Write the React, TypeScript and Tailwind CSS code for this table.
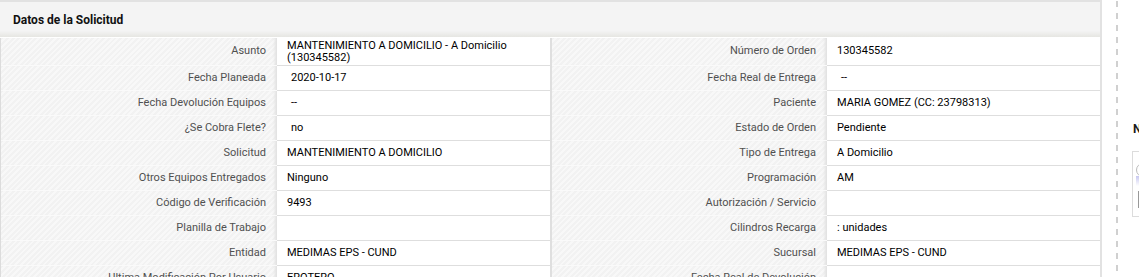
import React from "react";

type Row = { l1: string; v1: string; l2: string; v2: string; s1?: boolean; s2?: boolean; tall?: boolean };

const rows: Row[] = [
  { l1: "Asunto", v1: "MANTENIMIENTO A DOMICILIO - A Domicilio (130345582)", l2: "Número de Orden", v2: "130345582", tall: true },
  { l1: "Fecha Planeada", v1: "2020-10-17", s1: true, l2: "Fecha Real de Entrega", v2: "--", s2: true },
  { l1: "Fecha Devolución Equipos", v1: "--", s1: true, l2: "Paciente", v2: "MARIA GOMEZ (CC: 23798313)" },
  { l1: "¿Se Cobra Flete?", v1: "no", s1: true, l2: "Estado de Orden", v2: "Pendiente" },
  { l1: "Solicitud", v1: "MANTENIMIENTO A DOMICILIO", l2: "Tipo de Entrega", v2: "A Domicilio" },
  { l1: "Otros Equipos Entregados", v1: "Ninguno", l2: "Programación", v2: "AM" },
  { l1: "Código de Verificación", v1: "9493", l2: "Autorización / Servicio", v2: "" },
  { l1: "Planilla de Trabajo", v1: "", l2: "Cilindros Recarga", v2: ": unidades" },
  { l1: "Entidad", v1: "MEDIMAS EPS - CUND", l2: "Sucursal", v2: "MEDIMAS EPS - CUND" },
  { l1: "Ultima Modificación Por Usuario", v1: "EROTERO", l2: "Fecha Real de Devolución", v2: "" },
];

const labelCls =
  "flex items-center justify-end pr-[11px] text-[#505050] border-b border-[#fafafa] bg-[repeating-linear-gradient(135deg,#f2f2f2_0px,#f2f2f2_2px,#f8f8f8_2px,#f8f8f8_4px)] shadow-[inset_-4px_0_3px_-2px_#e0e0e0]";

function Label({ text, w }: { text: string; w: string }) {
  return <div className={`${labelCls} ${w} shrink-0`}>{text}</div>;
}

function Value({ text, space, tall }: { text: string; space?: boolean; tall?: boolean }) {
  return (
    <div
      className={`w-[273px] shrink-0 bg-white border-b border-[#dedede] text-black flex ${
        tall ? "items-start pt-[2px] leading-[12px]" : "items-center"
      } ${space ? "pl-[14px]" : "pl-[10px]"} pr-2`}
    >
      {text}
    </div>
  );
}

export default function App() {
  return (
    <div className="w-[1139px] h-[277px] overflow-hidden bg-white flex items-start font-['Roboto','Liberation_Sans',Arial,sans-serif] text-[11px]">
      <div className="w-[1102px] shrink-0 flex flex-col">
        <div className="h-[2px] shrink-0 bg-[#e2e2e2]" />
        <div className="h-[35px] shrink-0 bg-[linear-gradient(to_bottom,#f4f4f4_0%,#f4f4f4_82%,#e6e6e2_100%)] border-r-2 border-[#e2e2e2] flex items-center pl-[13px] font-bold text-[12px] text-[#111]">
          Datos de la Solicitud
        </div>
        <div className="h-[1px] shrink-0 bg-white border-r-2 border-[#e2e2e2]" />
        <div className="flex flex-col shrink-0 border-l border-[#dcdcdc]">
          {rows.map((r, i) => (
            <div key={i} className={`flex shrink-0 ${r.tall ? "h-[28px]" : "h-[25px]"}`}>
              <Label text={r.l1} w="w-[276px]" />
              <Value text={r.v1} space={r.s1} tall={r.tall} />
              <div className="w-[2px] shrink-0 bg-[#dfdfdf]" />
              <Label text={r.l2} w="w-[275px]" />
              <Value text={r.v2} space={r.s2} />
              <div className="w-[2px] shrink-0 bg-[#e2e2e2]" />
            </div>
          ))}
        </div>
      </div>
      <div className="w-[14px] shrink-0" />
      <div className="w-[2px] shrink-0 h-[277px] bg-[repeating-linear-gradient(to_bottom,#d0d0d0_0px,#d0d0d0_6px,transparent_6px,transparent_12px)] mt-[1px]" />
      <div className="flex-1 flex flex-col pl-[14px] pt-[122px]">
        <div className="ml-[1px] font-bold text-[12px] text-[#1a1a1a] leading-[14px]">N</div>
        <div className="mt-[15px] w-[20px] h-[66px] border-l border-t border-b border-[#dcdcdc] relative">
          <div className="absolute left-[3px] top-[11px] w-[14px] h-[14px] rounded-full border border-[#bbb] bg-white" />
          <div className="absolute left-[3px] top-[24px] w-[10px] h-[10px] bg-[linear-gradient(to_bottom,#c8c8f0,#ffffff)]" />
          <div className="absolute left-[5px] top-[39px] w-[8px] h-[17px] border border-[#999] bg-white" />
        </div>
      </div>
    </div>
  );
}
